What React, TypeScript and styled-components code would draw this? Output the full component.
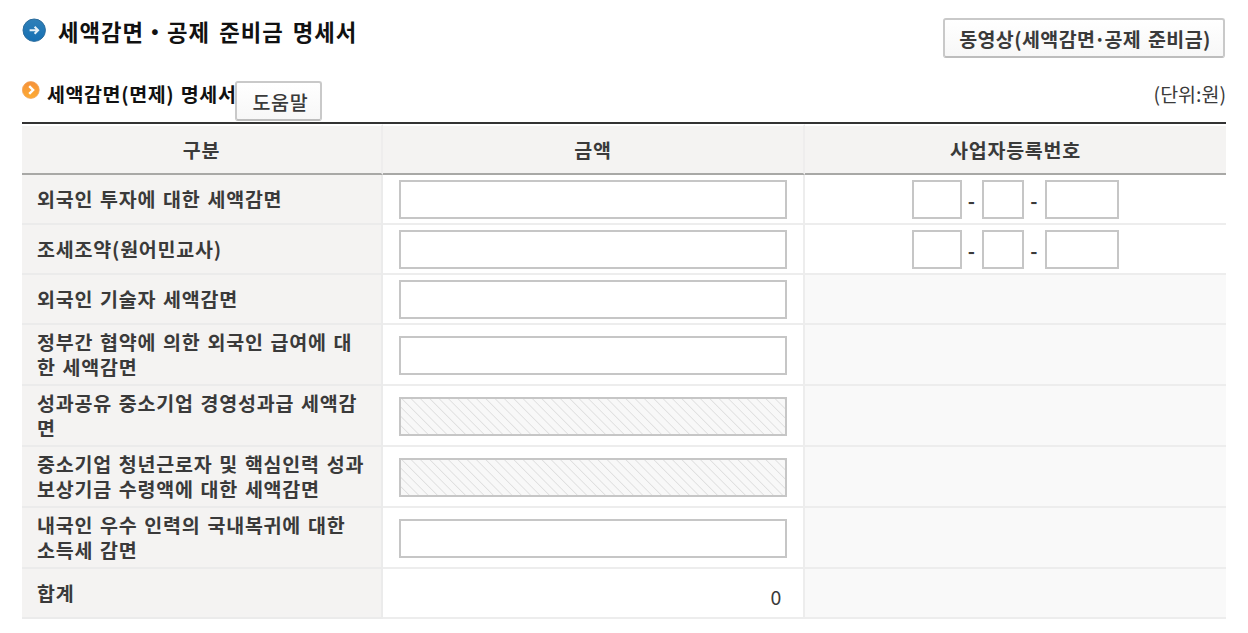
import React from "react";
import styled, { createGlobalStyle } from "styled-components";

interface RowProps {
  label: string;
  tall?: boolean;
  disabled?: boolean;
  bizNumber?: boolean;
}

const rows: RowProps[] = [
  { label: "외국인 투자에 대한 세액감면", bizNumber: true },
  { label: "조세조약(원어민교사)", bizNumber: true },
  { label: "외국인 기술자 세액감면" },
  { label: "정부간 협약에 의한 외국인 급여에 대한 세액감면", tall: true },
  {
    label: "성과공유 중소기업 경영성과급 세액감면",
    tall: true,
    disabled: true,
  },
  {
    label: "중소기업 청년근로자 및 핵심인력 성과보상기금 수령액에 대한 세액감면",
    tall: true,
    disabled: true,
  },
  { label: "내국인 우수 인력의 국내복귀에 대한 소득세 감면", tall: true },
];

export default function App() {
  return (
    <Page>
      <GlobalStyle />
      <TitleBar>
        <ArrowIcon />
        <Title>세액감면・공제 준비금 명세서</Title>
        <Button $width={282}>
          동영상(세액감면<Dot>·</Dot>공제 준비금)
        </Button>
      </TitleBar>
      <SubTitleBar>
        <ChevronIcon />
        <SubTitle>세액감면(면제) 명세서</SubTitle>
        <HelpButton $width={87}>도움말</HelpButton>
        <Unit>(단위:원)</Unit>
      </SubTitleBar>
      <Table>
        <colgroup>
          <col style={{ width: 361 }} />
          <col style={{ width: 422 }} />
          <col />
        </colgroup>
        <thead>
          <tr>
            <HeadCell>구분</HeadCell>
            <HeadCell>금액</HeadCell>
            <HeadCell>사업자등록번호</HeadCell>
          </tr>
        </thead>
        <tbody>
          {rows.map((row) => (
            <Row key={row.label} {...row} />
          ))}
          <tr>
            <LabelCell>합계</LabelCell>
            <Cell>
              <Total>0</Total>
            </Cell>
            <Cell $empty />
          </tr>
        </tbody>
      </Table>
    </Page>
  );
}

function Row({ label, tall, disabled, bizNumber }: RowProps) {
  return (
    <tr>
      <LabelCell $tall={tall}>{label}</LabelCell>
      <Cell $tall={tall}>
        <Input $width={388} disabled={disabled} />
      </Cell>
      <Cell $empty={!bizNumber}>{bizNumber && <BizNumber />}</Cell>
    </tr>
  );
}

function BizNumber() {
  return (
    <BizNumberGroup>
      <Input $width={50} />
      <Dash>-</Dash>
      <Input $width={42} />
      <Dash>-</Dash>
      <Input $width={74} />
    </BizNumberGroup>
  );
}

function ArrowIcon() {
  return (
    <svg width="24" height="24" viewBox="0 0 24 24">
      <defs>
        <linearGradient id="blue" x1="0" y1="0" x2="0" y2="1">
          <stop offset="0" stopColor="#2f80b8" />
          <stop offset="1" stopColor="#1670b4" />
        </linearGradient>
      </defs>
      <circle cx="12.2" cy="12.2" r="11.2" fill="url(#blue)" stroke="#2c6c9c" />
      <path
        d="M7.6 12.3h8.6M12.6 8.8l3.5 3.5-3.5 3.5"
        fill="none"
        stroke="#e6f1f8"
        strokeWidth="2"
      />
    </svg>
  );
}

function ChevronIcon() {
  return (
    <svg width="18" height="18" viewBox="0 0 18 18">
      <defs>
        <linearGradient id="orange" x1="0" y1="0" x2="0" y2="1">
          <stop offset="0" stopColor="#f5913a" />
          <stop offset="1" stopColor="#fdac33" />
        </linearGradient>
      </defs>
      <circle cx="8.8" cy="9" r="8.4" fill="url(#orange)" stroke="#f3a55c" strokeWidth="0.8" />
      <path d="M7.2 5.2l3.9 3.8-3.9 3.8" fill="none" stroke="#fff" strokeWidth="2.4" />
    </svg>
  );
}

const GlobalStyle = createGlobalStyle`
  * {
    box-sizing: border-box;
  }

  body {
    margin: 0;
    background: #fff;
    color: #3a3a3a;
    font-family: "Noto Sans CJK KR", sans-serif;
  }
`;

const Page = styled.main`
  width: 1248px;
  height: 633px;
  padding: 0 22px;
  font-size: 19.5px;
  line-height: 25px;
  letter-spacing: 0.8px;
  word-spacing: 1.6px;
`;

const TitleBar = styled.header`
  display: flex;
  align-items: flex-start;
  height: 80px;
  padding-top: 18px;
`;

const Title = styled.h1`
  margin: 1px 0 0 12px;
  font-size: 22.3px;
  line-height: 24px;
  font-weight: 700;
  letter-spacing: 0.95px;
  word-spacing: 3.2px;
  color: #111;
`;

const Button = styled.button<{ $width: number }>`
  width: ${(props) => props.$width}px;
  height: 40px;
  margin-left: auto;
  margin-right: 1px;
  padding: 0 0 0 2px;
  border: 2px solid #c9c9c9;
  border-bottom-color: #bdbdbd;
  border-radius: 3px;
  background: linear-gradient(#fff, #f7f7f7);
  color: #3a3a3a;
  font: inherit;
  font-weight: 700;
  letter-spacing: 0.4px;
  word-spacing: 2px;
  white-space: nowrap;
`;

const HelpButton = styled(Button)`
  margin: 1px 0 0 0;
  padding-left: 4px;
  font-weight: 500;
  letter-spacing: 0.8px;
`;

const Dot = styled.span`
  margin: 0 -1.4px;
`;

const SubTitleBar = styled.div`
  display: flex;
  align-items: flex-start;
  height: 42px;

  svg {
    margin-top: 1px;
  }
`;

const SubTitle = styled.h2`
  width: 188px;
  margin: 1px 0 0 7px;
  font-size: 19.5px;
  font-weight: 700;
  letter-spacing: 0.6px;
  white-space: nowrap;
  color: #111;
`;

const Unit = styled.span`
  margin: 1px 0 0 auto;
  letter-spacing: 0;
`;

const Table = styled.table`
  width: 1204px;
  table-layout: fixed;
  border-collapse: separate;
  border-spacing: 0;
  border-top: 2px solid #333;
`;

const HeadCell = styled.th`
  height: 51px;
  padding: 0;
  border-top: 2px solid #fff;
  border-bottom: 2px solid #a8a8a6;
  background: #f4f3f2;
  font-weight: 700;

  &:not(:last-child) {
    border-right: 2px solid #eeeded;
  }
`;

const Cell = styled.td<{ $empty?: boolean; $tall?: boolean }>`
  padding: ${(props) => (props.$tall ? "2px 16px 0" : "0 16px")};
  border-bottom: 2px solid #ededed;
  background: ${(props) => (props.$empty ? "#f9f9f9" : "#fff")};
  vertical-align: middle;

  &:not(:last-child) {
    border-right: 2px solid #ededed;
  }
`;

const LabelCell = styled.th<{ $tall?: boolean }>`
  height: ${(props) => (props.$tall ? 61 : 50)}px;
  padding: 0 13px 1px 15px;
  border-right: 2px solid #ebebeb;
  border-bottom: 2px solid #ebebeb;
  background: #f4f3f2;
  font-weight: 700;
  text-align: left;
`;

const Input = styled.input<{ $width: number }>`
  display: block;
  width: ${(props) => props.$width}px;
  height: 39px;
  border: 2px solid #c6c6c6;
  background: #fff;

  &:disabled {
    background: repeating-linear-gradient(
      45deg,
      #f8f8f8 0,
      #f8f8f8 4.9px,
      #dfdfdf 5.7px,
      #f8f8f8 6.6px
    );
  }
`;

const BizNumberGroup = styled.div`
  display: flex;
  justify-content: center;
  align-items: center;
  padding-right: 1px;
`;

const Dash = styled.span`
  width: 20.5px;
  padding-top: 2px;
  text-align: center;
  font-weight: 700;
`;

const Total = styled.div`
  padding: 6px 5px 0 0;
  text-align: right;
`;
